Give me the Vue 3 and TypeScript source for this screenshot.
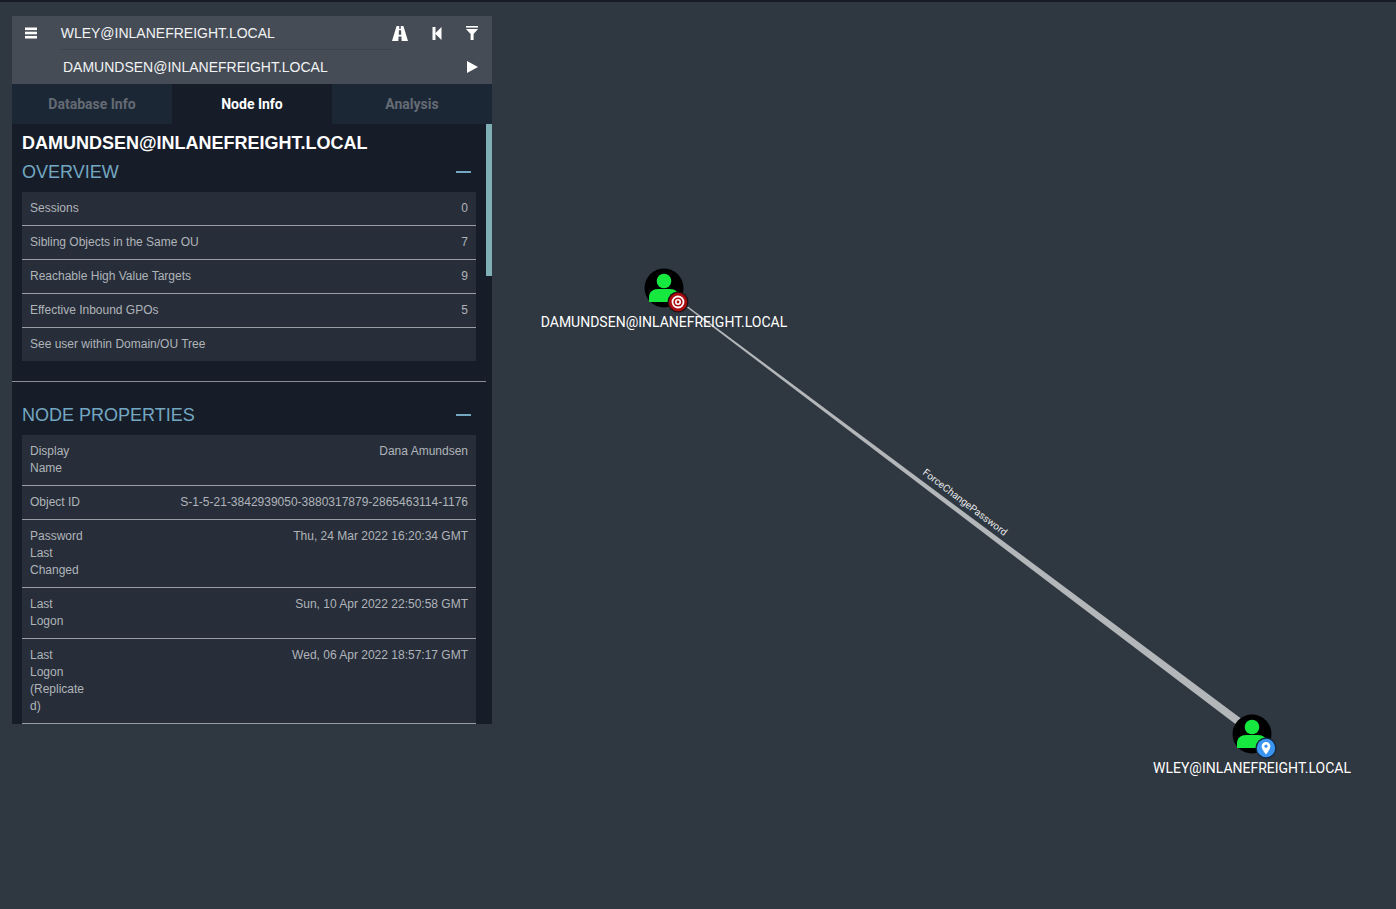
<script setup lang="ts">
const overview = [
  { label: "Sessions", value: "0" },
  { label: "Sibling Objects in the Same OU", value: "7" },
  { label: "Reachable High Value Targets", value: "9" },
  { label: "Effective Inbound GPOs", value: "5" },
  { label: "See user within Domain/OU Tree", value: "" },
];

const properties = [
  { label: "Display Name", value: "Dana Amundsen" },
  { label: "Object ID", value: "S-1-5-21-3842939050-3880317879-2865463114-1176" },
  { label: "Password Last Changed", value: "Thu, 24 Mar 2022 16:20:34 GMT" },
  { label: "Last Logon", value: "Sun, 10 Apr 2022 22:50:58 GMT" },
  { label: "Last Logon (Replicated)", value: "Wed, 06 Apr 2022 18:57:17 GMT" },
  { label: "Password Never Expires", value: "False" },
];

const tabs = ["Database Info", "Node Info", "Analysis"];
const activeTab = "Node Info";

const nodes = [
  { name: "DAMUNDSEN@INLANEFREIGHT.LOCAL", x: 664, y: 288, kind: "target" },
  { name: "WLEY@INLANEFREIGHT.LOCAL", x: 1252, y: 734, kind: "owned" },
];
</script>

<template>
  <div class="page">
    <div class="topline"></div>

    <svg class="edges" width="1396" height="909" viewBox="0 0 1396 909">
      <polygon points="687,307.6 688,306.4 1243,720 1238,726" fill="#b4b7ba" />
      <text class="edge-label" transform="translate(963 505) rotate(37.2)" text-anchor="middle">ForceChangePassword</text>
    </svg>

    <div
      v-for="n in nodes"
      :key="n.name"
      class="node"
      :style="{ left: n.x + 'px', top: n.y + 'px' }"
    >
      <svg class="node-icon" width="60" height="60" viewBox="-30 -30 60 60">
        <circle cx="0" cy="0" r="19.5" fill="#000" />
        <circle cx="0" cy="-7" r="7.3" fill="#17e83f" />
        <path d="M-15 14v-5c0-5 4-8 9-8h12c5 0 9 3 9 8v5z" fill="#17e83f" />
        <g v-if="n.kind === 'target'" transform="translate(14 14)">
          <circle r="10.5" fill="#1d1214" />
          <circle r="9.2" fill="#ab0c12" />
          <circle r="6.4" fill="#fff" />
          <circle r="4.6" fill="#ab0c12" />
          <circle r="3" fill="#fff" />
          <circle r="1.4" fill="#ab0c12" />
        </g>
        <g v-else transform="translate(14 14)">
          <circle r="10.5" fill="#12263c" />
          <circle r="9.2" fill="#3a94f0" />
          <path d="M0 6.5c-2-2.8-4.4-5.4-4.4-8.2a4.4 4.4 0 0 1 8.8 0c0 2.8-2.4 5.4-4.4 8.2z" fill="#fff" />
          <circle cy="-1.8" r="1.6" fill="#3a94f0" />
        </g>
      </svg>
      <div class="node-label">{{ n.name }}</div>
    </div>

    <aside class="panel">
      <header class="search">
        <div class="search-row">
          <div class="slot-left">
            <svg width="12" height="12" viewBox="0 0 12 12" fill="#fff">
              <rect x="0" y="0.5" width="12" height="2.6" />
              <rect x="0" y="4.7" width="12" height="2.6" />
              <rect x="0" y="8.9" width="12" height="2.6" />
            </svg>
          </div>
          <div class="search-text first">WLEY@INLANEFREIGHT.LOCAL</div>
          <div class="tools">
            <svg width="16" height="15" viewBox="0 0 16 15" fill="#fff">
              <path d="M4.6 0h2.7l-.2 2.7h1.8L8.7 0h2.7L16 15H9.7l-.3-4.4H6.6L6.3 15H0zM6.9 4.2l-.2 4.5h2.6l-.2-4.5z" />
            </svg>
            <svg width="10" height="13" viewBox="0 0 10 13" fill="#fff">
              <rect x="0.5" y="0" width="3" height="13" />
              <path d="M3 6.5 9.5 0v13z" />
            </svg>
            <svg width="12" height="14" viewBox="0 0 12 14" fill="#fff">
              <rect x="0" y="0" width="12" height="1.6" />
              <path d="M0 3h12L7.6 8v6H4.6V8z" />
            </svg>
          </div>
        </div>
        <div class="search-row">
          <div class="slot-left"></div>
          <div class="search-text">DAMUNDSEN@INLANEFREIGHT.LOCAL</div>
          <div class="tools">
            <svg width="11" height="12" viewBox="0 0 11 12" fill="#fff">
              <path d="M0 0l11 6-11 6z" />
            </svg>
          </div>
        </div>
      </header>

      <nav class="tabs">
        <div v-for="t in tabs" :key="t" class="tab" :class="{ active: t === activeTab }">{{ t }}</div>
      </nav>

      <div class="body">
        <div class="scroll">
          <h1 class="title">DAMUNDSEN@INLANEFREIGHT.LOCAL</h1>
          <section class="block first-block">
            <div class="block-head">
              <span>OVERVIEW</span>
              <i class="minus"></i>
            </div>
            <div class="table">
              <div v-for="r in overview" :key="r.label" class="row">
                <span>{{ r.label }}</span>
                <span>{{ r.value }}</span>
              </div>
            </div>
          </section>
          <hr class="rule" />
          <section class="block">
            <div class="block-head">
              <span>NODE PROPERTIES</span>
              <i class="minus"></i>
            </div>
            <div class="table">
              <div v-for="p in properties" :key="p.label" class="row prop">
                <span class="prop-label">{{ p.label }}</span>
                <span>{{ p.value }}</span>
              </div>
            </div>
          </section>
        </div>
        <div class="scrollbar"><div class="thumb"></div></div>
      </div>
    </aside>
  </div>
</template>

<style>
html,
body {
  margin: 0;
  background: #2f3740;
  overflow: hidden;
}
</style>

<style scoped>
.page {
  position: relative;
  width: 1396px;
  height: 909px;
  box-sizing: border-box;
  padding: 16px 0 0 12px;
  background: #2f3740;
  overflow: hidden;
  font-family: "Liberation Sans", Arial, sans-serif;
}

.topline {
  position: absolute;
  left: 0;
  top: 0;
  width: 100%;
  height: 2px;
  background: #171c24;
}

.edges {
  position: absolute;
  left: 0;
  top: 0;
}

.edge-label {
  font-family: Roboto, sans-serif;
  font-size: 10px;
  fill: #e6e8ea;
}

.node {
  position: absolute;
  width: 0;
  height: 0;
}

.node-icon {
  position: absolute;
  left: -30px;
  top: -30px;
}

.node-label {
  position: absolute;
  left: -200px;
  width: 400px;
  top: 25px;
  text-align: center;
  font-family: Roboto, sans-serif;
  font-size: 14px;
  line-height: 18px;
  color: #fff;
}

.panel {
  position: relative;
  width: 480px;
  height: 708px;
  display: flex;
  flex-direction: column;
  background: #161d29;
}

.search {
  height: 68px;
  background: #454c56;
  color: #fff;
}

.search-row {
  height: 34px;
  display: flex;
  align-items: center;
}

.slot-left {
  width: 39px;
  padding-left: 13px;
  box-sizing: border-box;
  display: flex;
  align-items: center;
}

.search-text {
  margin-left: 12px;
  width: 364px;
  height: 34px;
  box-sizing: border-box;
  line-height: 34px;
  font-size: 14px;
  color: #f2f3f4;
}

.search-text.first {
  border-bottom: 1px solid #3c424c;
}

.tools {
  flex: 1;
  display: flex;
  justify-content: flex-end;
  align-items: center;
  gap: 24px;
  padding-right: 14px;
}

.tabs {
  height: 40px;
  display: flex;
  background: #1c2736;
}

.tab {
  flex: 1;
  text-align: center;
  line-height: 40px;
  font-family: Roboto, sans-serif;
  font-weight: 700;
  font-size: 14px;
  color: #646b75;
}

.tab.active {
  background: #161d29;
  color: #fff;
}

.body {
  flex: 1;
  min-height: 0;
  display: flex;
}

.scroll {
  width: 474px;
  overflow: hidden;
}

.scrollbar {
  width: 6px;
}

.thumb {
  height: 152px;
  background: #7fb0b6;
}

.title {
  margin: 0;
  padding: 9px 10px 0;
  font-size: 18px;
  line-height: 20px;
  font-weight: 700;
  color: #fff;
}

.block {
  padding: 0 10px;
}

.first-block {
  padding-top: 0;
  padding-bottom: 20px;
}

.block-head {
  display: flex;
  justify-content: space-between;
  align-items: center;
  height: 30px;
  padding-top: 4px;
  padding-bottom: 5px;
  box-sizing: content-box;
  font-size: 18px;
  color: #74a7c1;
}

.minus {
  display: block;
  width: 15px;
  height: 2px;
  margin-right: 5px;
  background: #74a7c1;
}

.rule {
  margin: 0 0 14px;
  border: 0;
  height: 1px;
  background: #8a8f95;
}

.table {
  background: #272e39;
  font-size: 12px;
  line-height: 17px;
  color: #b0b4b9;
}

.row {
  display: flex;
  justify-content: space-between;
  padding: 8px;
  border-bottom: 1px solid #9a9ea4;
}

.table:not(:has(.prop)) .row:last-child {
  border-bottom: 0;
}

.prop-label {
  width: 58px;
  overflow-wrap: anywhere;
}
</style>
